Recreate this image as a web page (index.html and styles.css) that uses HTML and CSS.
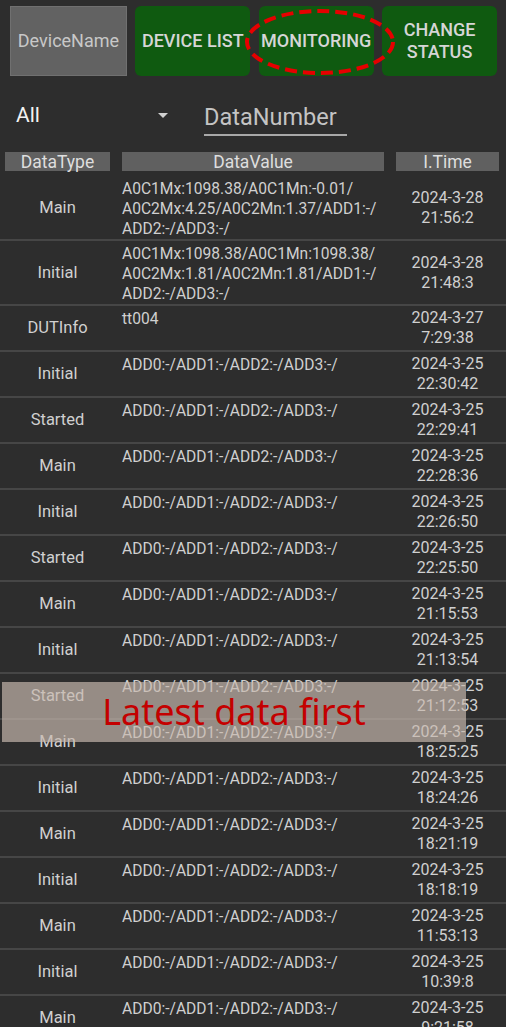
FILE: index.html
```html
<!DOCTYPE html>
<html lang="en">
<head>
  <meta charset="UTF-8">
  <meta name="viewport" content="width=device-width, initial-scale=1.0">
  <title>Monitoring</title>
  <link rel="stylesheet" href="styles.css">
</head>
<body>
  <!-- Top toolbar -->
  <div class="toolbar">
    <div class="device-name">DeviceName</div>
    <button class="nav-btn">DEVICE LIST</button>
    <button class="nav-btn">MONITORING</button>
    <button class="nav-btn">CHANGE<br>STATUS</button>
  </div>

  <!-- Filter -->
  <div class="filter">
    <div class="spinner">
      <span>All</span>
      <span class="arrow"></span>
    </div>
    <div class="data-number">DataNumber</div>
  </div>

  <!-- Table header -->
  <div class="table-head">
    <div class="head-cell">DataType</div>
    <div class="head-cell">DataValue</div>
    <div class="head-cell">I.Time</div>
  </div>

  <!-- Rows -->
  <div class="table-body">
    <div class="row">
      <div class="type">Main</div>
      <div class="value">A0C1Mx:1098.38/A0C1Mn:-0.01/<br>A0C2Mx:4.25/A0C2Mn:1.37/ADD1:-/<br>ADD2:-/ADD3:-/</div>
      <div class="time">2024-3-28<br>21:56:2</div>
    </div>
    <div class="row">
      <div class="type">Initial</div>
      <div class="value">A0C1Mx:1098.38/A0C1Mn:1098.38/<br>A0C2Mx:1.81/A0C2Mn:1.81/ADD1:-/<br>ADD2:-/ADD3:-/</div>
      <div class="time">2024-3-28<br>21:48:3</div>
    </div>
    <div class="row">
      <div class="type">DUTInfo</div>
      <div class="value">tt004</div>
      <div class="time">2024-3-27<br>7:29:38</div>
    </div>
    <div class="row">
      <div class="type">Initial</div>
      <div class="value">ADD0:-/ADD1:-/ADD2:-/ADD3:-/</div>
      <div class="time">2024-3-25<br>22:30:42</div>
    </div>
    <div class="row">
      <div class="type">Started</div>
      <div class="value">ADD0:-/ADD1:-/ADD2:-/ADD3:-/</div>
      <div class="time">2024-3-25<br>22:29:41</div>
    </div>
    <div class="row">
      <div class="type">Main</div>
      <div class="value">ADD0:-/ADD1:-/ADD2:-/ADD3:-/</div>
      <div class="time">2024-3-25<br>22:28:36</div>
    </div>
    <div class="row">
      <div class="type">Initial</div>
      <div class="value">ADD0:-/ADD1:-/ADD2:-/ADD3:-/</div>
      <div class="time">2024-3-25<br>22:26:50</div>
    </div>
    <div class="row">
      <div class="type">Started</div>
      <div class="value">ADD0:-/ADD1:-/ADD2:-/ADD3:-/</div>
      <div class="time">2024-3-25<br>22:25:50</div>
    </div>
    <div class="row">
      <div class="type">Main</div>
      <div class="value">ADD0:-/ADD1:-/ADD2:-/ADD3:-/</div>
      <div class="time">2024-3-25<br>21:15:53</div>
    </div>
    <div class="row">
      <div class="type">Initial</div>
      <div class="value">ADD0:-/ADD1:-/ADD2:-/ADD3:-/</div>
      <div class="time">2024-3-25<br>21:13:54</div>
    </div>
    <div class="row">
      <div class="type">Started</div>
      <div class="value">ADD0:-/ADD1:-/ADD2:-/ADD3:-/</div>
      <div class="time">2024-3-25<br>21:12:53</div>
    </div>
    <div class="row">
      <div class="type">Main</div>
      <div class="value">ADD0:-/ADD1:-/ADD2:-/ADD3:-/</div>
      <div class="time">2024-3-25<br>18:25:25</div>
    </div>
    <div class="row">
      <div class="type">Initial</div>
      <div class="value">ADD0:-/ADD1:-/ADD2:-/ADD3:-/</div>
      <div class="time">2024-3-25<br>18:24:26</div>
    </div>
    <div class="row">
      <div class="type">Main</div>
      <div class="value">ADD0:-/ADD1:-/ADD2:-/ADD3:-/</div>
      <div class="time">2024-3-25<br>18:21:19</div>
    </div>
    <div class="row">
      <div class="type">Initial</div>
      <div class="value">ADD0:-/ADD1:-/ADD2:-/ADD3:-/</div>
      <div class="time">2024-3-25<br>18:18:19</div>
    </div>
    <div class="row">
      <div class="type">Main</div>
      <div class="value">ADD0:-/ADD1:-/ADD2:-/ADD3:-/</div>
      <div class="time">2024-3-25<br>11:53:13</div>
    </div>
    <div class="row">
      <div class="type">Initial</div>
      <div class="value">ADD0:-/ADD1:-/ADD2:-/ADD3:-/</div>
      <div class="time">2024-3-25<br>10:39:8</div>
    </div>
    <div class="row">
      <div class="type">Main</div>
      <div class="value">ADD0:-/ADD1:-/ADD2:-/ADD3:-/</div>
      <div class="time">2024-3-25<br>9:21:58</div>
    </div>
  </div>

  <!-- Annotations -->
  <svg class="highlight" width="154" height="68" viewBox="0 0 154 68">
    <ellipse cx="77" cy="34" rx="73" ry="31" fill="none" stroke="#e60000" stroke-width="4" stroke-dasharray="12 6"/>
  </svg>
  <div class="note">Latest data first</div>
</body>
</html>
```

FILE: styles.css
```css
body {
  margin: 0;
  background-color: #2d2d2d;
  font-family: Roboto, "Liberation Sans", sans-serif;
  color: #d0d0d0;
  height: 1027px;
  overflow: hidden;
  position: relative;
}

/* toolbar */
.toolbar {
  display: flex;
  gap: 8.5px;
  padding: 6px 9px 0 10px;
  height: 70px;
}

.device-name,
.nav-btn {
  flex: 1;
  min-width: 0;
  display: flex;
  align-items: center;
  justify-content: center;
  font-family: Roboto, sans-serif;
  font-size: 18px;
  line-height: 22px;
}

.device-name {
  background: #626262;
  border: 1px solid #707070;
  color: #c8c8c8;
}

.nav-btn {
  border: none;
  border-radius: 6px;
  background: #0f5a10;
  color: #d6d6d6;
  font-weight: 500;
  padding: 0;
  text-align: center;
}

/* filter row */
.filter {
  display: flex;
  align-items: center;
  height: 50px;
  margin-top: 14px;
}

.spinner {
  width: 188px;
  padding-left: 16px;
  display: flex;
  align-items: center;
  justify-content: space-between;
  font-size: 21px;
  color: #f2f2f2;
  box-sizing: border-box;
}

.spinner .arrow {
  width: 0;
  height: 0;
  border-left: 5px solid transparent;
  border-right: 5px solid transparent;
  border-top: 5px solid #d0d0d0;
  margin-right: 20px;
}

.data-number {
  margin-left: 16px;
  width: 143px;
  font-size: 23.5px;
  color: #c4c4c4;
  padding: 4px 0 3px;
  border-bottom: 2px solid #a8a8a8;
  position: relative;
  top: 2px;
}

/* table */
.table-head,
.row {
  display: grid;
  grid-template-columns: 105px 262px 103px;
  column-gap: 12px;
  padding: 0 7px 0 5px;
}

.table-head {
  margin-top: 12px;
  margin-bottom: 5px;
}

.head-cell {
  background: #606060;
  color: #dedede;
  text-align: center;
  font-size: 17.5px;
  line-height: 20px;
  height: 19px;
}

.row {
  border-bottom: 2px solid #464646;
  line-height: 20px;
}

.type {
  align-self: center;
  text-align: center;
  font-size: 16.5px;
}

.value {
  padding-top: 3px;
  font-size: 15.6px;
  white-space: nowrap;
}

.time {
  align-self: center;
  text-align: center;
  padding: 2px 0;
  font-size: 16px;
}

/* annotations */
.highlight {
  position: absolute;
  left: 243px;
  top: 8px;
}

.note {
  position: absolute;
  left: 2px;
  top: 682px;
  width: 464px;
  height: 60px;
  background: rgba(200, 185, 175, 0.68);
  color: #c40000;
  font-family: "Noto Sans", "Open Sans", sans-serif;
  font-size: 36px;
  line-height: 60px;
  text-align: center;
}
```
